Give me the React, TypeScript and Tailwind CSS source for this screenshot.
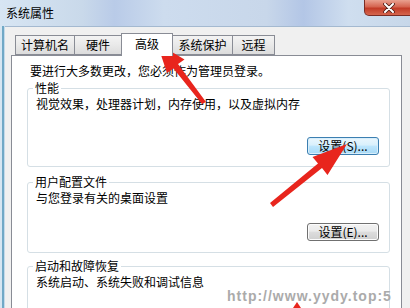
import React from "react";

const Tab = ({ label, w, active }: { label: string; w: number; active?: boolean }) => (
  <div
    style={{ width: w }}
    className={
      active
        ? "relative z-10 h-[23px] mb-[-1px] border border-b-0 border-[#898c95] bg-white flex items-start justify-center pt-[3px] ml-[-1px]"
        : "h-[20px] border border-[#898c95] bg-[linear-gradient(#f3f3f3,#e9e9e9_50%,#dcdcdc)] flex items-start justify-center pt-[2px] ml-[-1px] first:ml-0"
    }
  >
    <span className="text-[12px] leading-[14px] text-black">{label}</span>
  </div>
);

const Btn = ({ label, hot }: { label: string; hot?: boolean }) => (
  <div
    className={
      "self-end w-[72px] h-[18px] rounded-[3px] border flex items-center justify-center text-[12px] leading-[14px] text-black " +
      (hot
        ? "border-[#3c7fb1] bg-[linear-gradient(#eaf6fd,#d9f0fc_45%,#bee6fd_50%,#a7d9f5)] shadow-[inset_0_0_0_1px_#d8eefb]"
        : "border-[#707070] bg-[linear-gradient(#f2f2f2,#ebebeb_45%,#dddddd_50%,#cfcfcf)] shadow-[inset_0_0_0_1px_#fcfcfc]")
    }
  >
    {label}
  </div>
);

const Group = ({
  title,
  text,
  h,
  mt,
  pt,
  btn,
  btnMt,
  hot,
}: {
  title: string;
  text: string;
  h: number;
  mt: number;
  pt: number;
  btn?: string;
  btnMt?: number;
  hot?: boolean;
}) => (
  <div
    style={{ height: h, marginTop: mt, paddingTop: pt }}
    className="relative w-[363px] border border-[#d5dfe5] rounded-[3px] flex flex-col pl-[8px] pr-[10px]"
  >
    <span className="absolute top-[-8px] left-[5px] px-[2px] bg-white text-[12px] leading-[14px] text-black">
      {title}
    </span>
    <span className="text-[12px] leading-[14px] text-black">{text}</span>
    {btn && (
      <div style={{ marginTop: btnMt }} className="flex flex-col">
        <Btn label={btn} hot={hot} />
      </div>
    )}
  </div>
);

export default function App() {
  return (
    <div className="relative w-[410px] h-[308px] overflow-hidden flex flex-col bg-[linear-gradient(90deg,#d6e6f2_0,#d6e6f2_2px,#70a8c6_2px,#70a8c6_4px,#c3d9ea_4px)] font-['Noto_Sans_CJK_SC','Noto_Sans',sans-serif]">
      {/* title bar */}
      <div className="h-[26px] shrink-0 flex items-start bg-[linear-gradient(90deg,#d7e5f3,#c9d9ea_20%,#b9cbe8_28%,#cddcee_40%,#c8d7ea_65%,#b3c6e6_74%,#cfdeef_85%,#c7d7e9)]">
        <span className="pl-[6px] pt-[6px] text-[12px] leading-[14px] text-black">系统属性</span>
        <div className="ml-auto mr-[-4px] w-[50px] h-[16px] rounded-bl-[5px] border border-t-0 border-[#7a2c24] bg-[linear-gradient(#e9a190,#d56450_45%,#c23b27_55%,#d5664e)] flex items-center justify-center">
          <svg width="12" height="10" viewBox="0 0 12 10">
            <path d="M2 1 L10 9 M10 1 L2 9" stroke="#4a1a14" strokeWidth="3.6" strokeLinecap="round" />
            <path d="M2 1 L10 9 M10 1 L2 9" stroke="#ffffff" strokeWidth="2" strokeLinecap="round" />
          </svg>
        </div>
      </div>
      {/* body */}
      <div className="flex-1 ml-[5px] border-t border-[#a4b9d0] bg-[#f0f0f0] pl-[6px] pt-[6px] flex flex-col">
        <div className="h-[22px] flex items-end pl-[4px]">
          <Tab label="计算机名" w={60} />
          <Tab label="硬件" w={48} />
          <Tab label="高级" w={52} active />
          <Tab label="系统保护" w={61} />
          <Tab label="远程" w={43} />
        </div>
        <div className="w-[391px] flex-1 border border-[#898c95] bg-white px-[15px] pt-[8px] flex flex-col">
          <span className="pl-[3px] text-[12px] leading-[14px] text-black">要进行大多数更改，您必须作为管理员登录。</span>
          <Group title="性能" text="视觉效果，处理器计划，内存使用，以及虚拟内存" h={79} mt={10} pt={8} btn="设置(S)..." btnMt={26} hot />
          <Group title="用户配置文件" text="与您登录有关的桌面设置" h={71} mt={15} pt={8} btn="设置(E)..." btnMt={18} />
          <Group title="启动和故障恢复" text="系统启动、系统失败和调试信息" h={60} mt={13} pt={8} />
        </div>
      </div>
      {/* watermark */}
      <span className="absolute left-[227px] top-[288px] text-[14px] leading-[16px] font-bold text-[#ababab] font-['Liberation_Sans',sans-serif] tracking-[1px]">
        http://www.yydy.top:5
      </span>
      {/* red arrows */}
      <svg className="absolute left-0 top-0 pointer-events-none" width="410" height="308" viewBox="0 0 410 308">
        <path d="M157 43 L184.5 59.5 L178 64 L206 102 L202 104 L173.5 68.5 L167 73 Z" fill="#e8251d" />
        <path d="M347 144 L327.5 175 L322 168 L273 207 L270 203 L318 163.5 L312.5 157 Z" fill="#e8251d" />
        <path d="M293 308 L297 302 L301 308 Z" fill="#e8251d" />
      </svg>
    </div>
  );
}
